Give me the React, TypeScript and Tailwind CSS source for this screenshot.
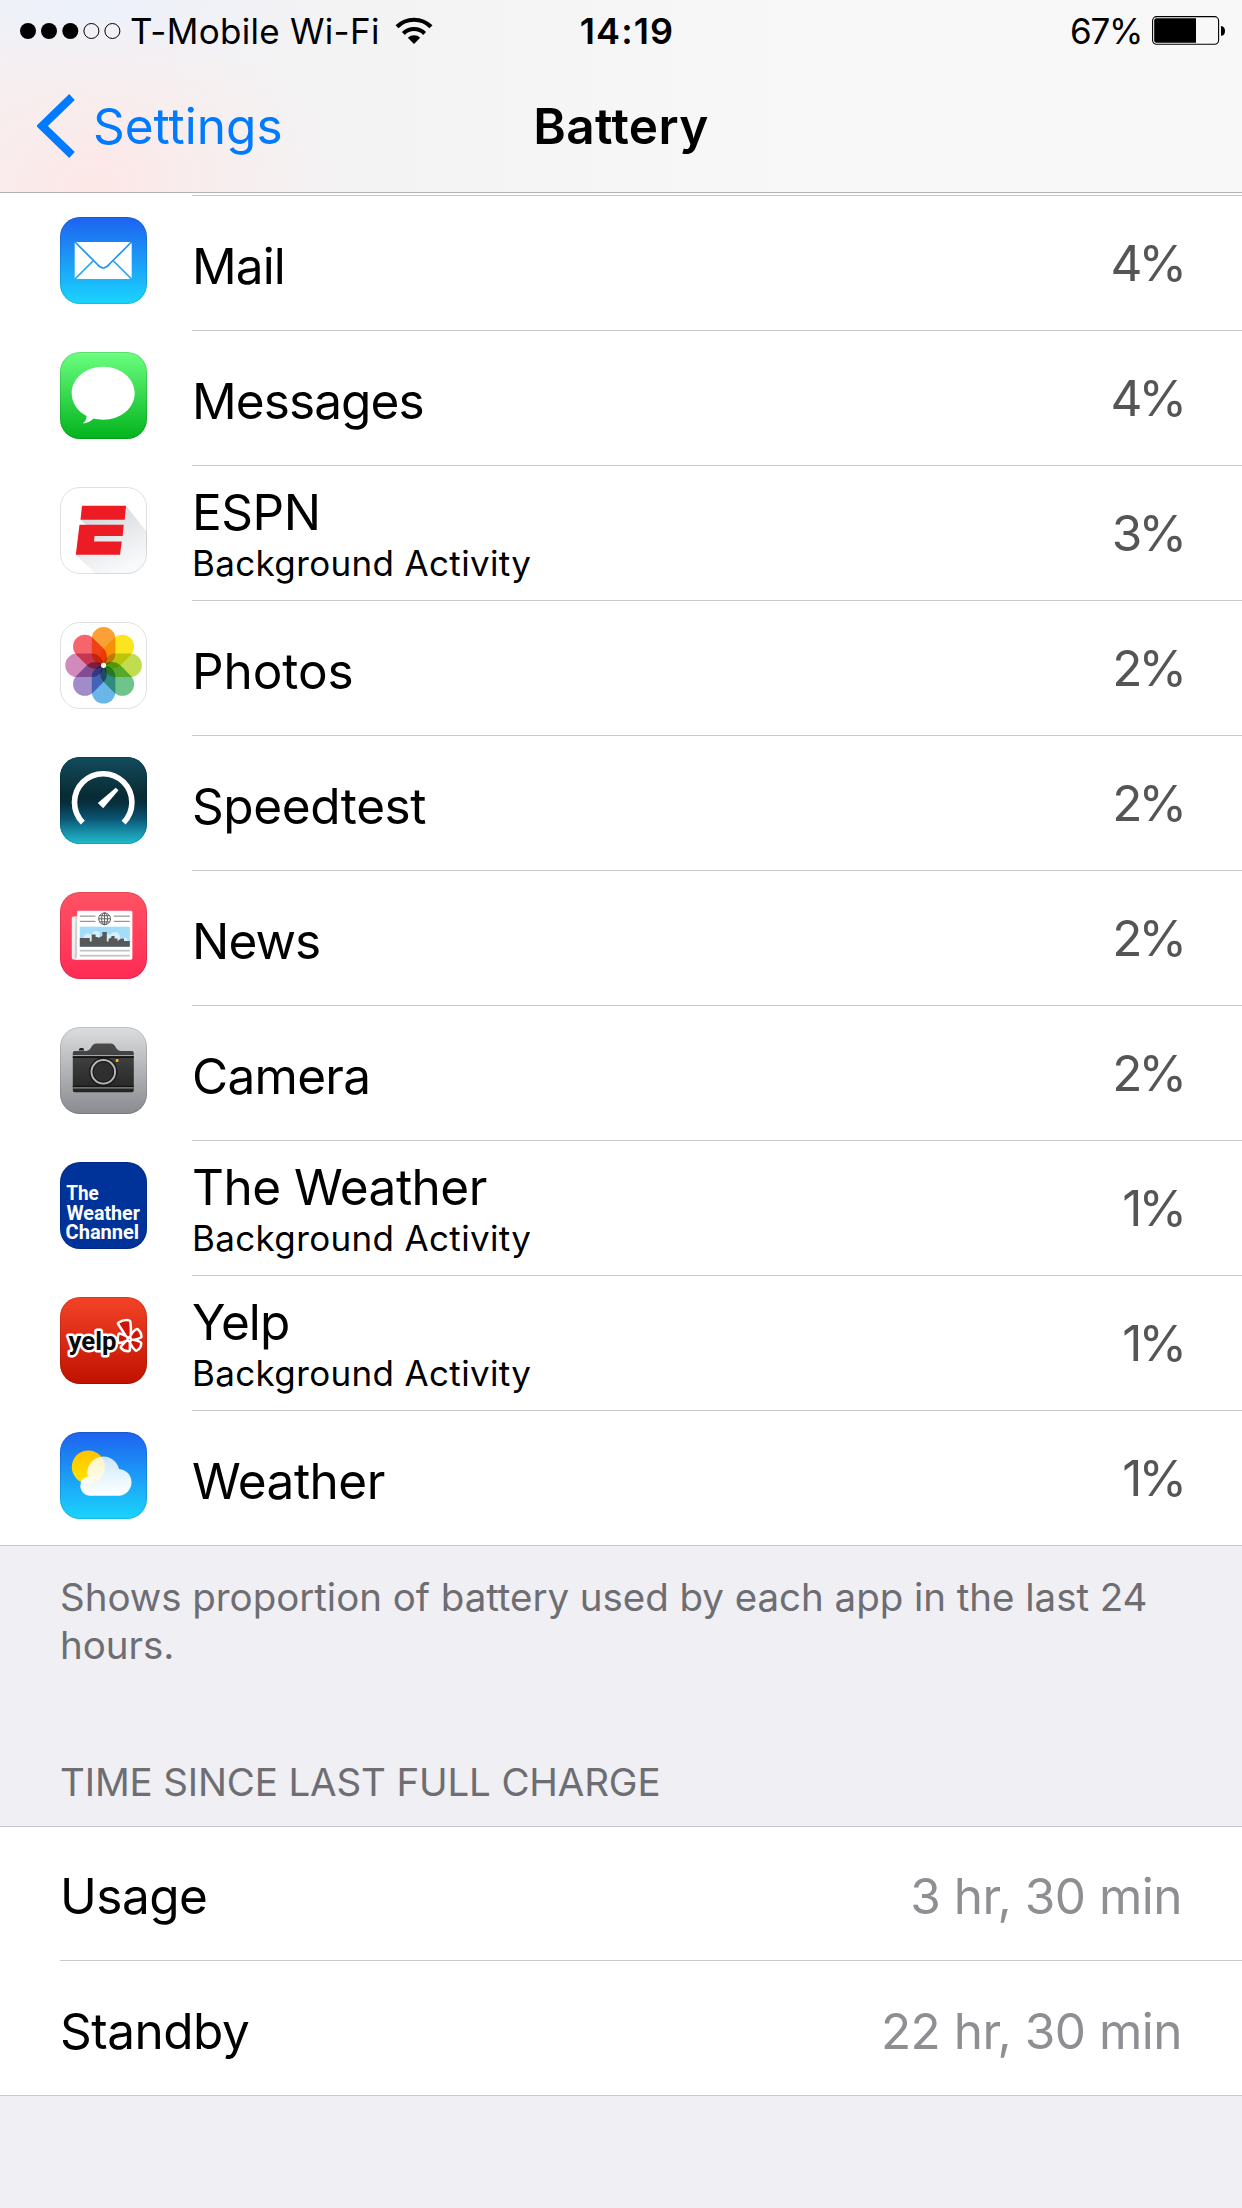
import type { ReactNode } from "react";

function Tile({ id, from, to, children }: { id: string; from: string; to: string; children: ReactNode }) {
  return (
    <svg viewBox="0 0 87 87" className="w-[87px] h-[87px] shrink-0">
      <defs>
        <linearGradient id={`${id}-bg`} x1="0" y1="0" x2="0" y2="1">
          <stop offset="0" stopColor={from} />
          <stop offset="1" stopColor={to} />
        </linearGradient>
        <clipPath id={`${id}-clip`}>
          <rect width="87" height="87" rx="20" />
        </clipPath>
      </defs>
      <g clipPath={`url(#${id}-clip)`}>
        <rect width="87" height="87" fill={`url(#${id}-bg)`} />
        {children}
      </g>
      <rect x="0.5" y="0.5" width="86" height="86" rx="19.5" fill="none" stroke="#000" strokeOpacity="0.12" />
    </svg>
  );
}

function MailIcon() {
  return (
    <Tile id="mail" from="#1d62f0" to="#1ad5fd">
      <rect x="14.7" y="25" width="57" height="37" rx="0.8" fill="#fff" />
      <g fill="none" stroke="#1f93f6" strokeWidth="1.7">
        <path d="M15 25 L37.5 47.5 Q43.2 54.5 49 47.5 L71.5 25" />
        <path d="M15 62 L33 44" stroke="#1fa5f9" />
        <path d="M71.5 62 L53.5 44" stroke="#1fa5f9" />
      </g>
    </Tile>
  );
}

function MessagesIcon() {
  return (
    <Tile id="messages" from="#6bff80" to="#02b31c">
      <path
        d="M43.2 14.7 C60.6 14.7 74.7 26.5 74.7 41.2 C74.7 55.9 60.6 67.7 43.2 67.7 C39.6 67.7 36.6 67.2 33.6 66.5 C30.5 69.5 27 71.3 22.8 71.5 C25.2 69.6 26.6 67 26.6 64 C17.6 59.3 11.7 51 11.7 41.2 C11.7 26.5 25.8 14.7 43.2 14.7 Z"
        fill="#fff"
      />
    </Tile>
  );
}

function EspnIcon() {
  return (
    <Tile id="espn" from="#ffffff" to="#ffffff">
      <defs>
        <linearGradient id="espn-shade" x1="0" y1="0" x2="0.5" y2="1">
          <stop offset="0.2" stopColor="#d6dadd" />
          <stop offset="1" stopColor="#f8f9fa" />
        </linearGradient>
      </defs>
      <path d="M66 18.7 L87 45 L87 87 L36 87 L15.8 67.7 L26 37.7 L20.5 32.7 Z" fill="url(#espn-shade)" />
      <path d="M22 18.7 H66 L64.7 32.7 H20.5 Z" fill="#ed1c24" />
      <path d="M19.5 37.7 H63.7 L62.7 49 H34.5 L34 54.5 H61.8 L60 67.7 H15.8 Z" fill="#ed1c24" />
    </Tile>
  );
}

const petals = [
  { angle: 0, color: "#fba034" },
  { angle: 45, color: "#fbe51f" },
  { angle: 90, color: "#c0dc4f" },
  { angle: 135, color: "#6fc48c" },
  { angle: 180, color: "#6ab6e8" },
  { angle: 225, color: "#a08cc8" },
  { angle: 270, color: "#d08abc" },
  { angle: 315, color: "#f4666c" },
];

function PhotosIcon() {
  return (
    <Tile id="photos" from="#ffffff" to="#ffffff">
      {petals.map((p) => (
        <rect
          key={p.angle}
          className="mix-blend-multiply"
          x="31.8"
          y="5"
          width="23.6"
          height="38.2"
          rx="11.8"
          fill={p.color}
          transform={`rotate(${p.angle} 43.6 43.3)`}
        />
      ))}
      <circle cx="43.6" cy="43.3" r="2.6" fill="#fff" />
    </Tile>
  );
}

function SpeedtestIcon() {
  return (
    <Tile id="speedtest" from="#114a5c" to="#20b8ca">
      <defs>
        <linearGradient id="speedtest-sky" x1="0" y1="0" x2="0" y2="1">
          <stop offset="0" stopColor="#124c5d" />
          <stop offset="0.45" stopColor="#082a33" />
          <stop offset="0.54" stopColor="#07303f" />
          <stop offset="0.7" stopColor="#0a5270" />
          <stop offset="0.82" stopColor="#14809b" />
          <stop offset="1" stopColor="#21bccd" />
        </linearGradient>
      </defs>
      <rect width="87" height="87" fill="url(#speedtest-sky)" />
      <path d="M22.8 65.6 A28.7 28.7 0 1 1 63.6 65.6" fill="none" stroke="#fff" strokeWidth="5.6" />
      <path d="M55.8 30.8 L58.5 33.2 L43.2 51.2 L37.8 46 Z" fill="#fff" />
    </Tile>
  );
}

function NewsIcon() {
  return (
    <Tile id="news" from="#ff5263" to="#ff2b55">
      <path d="M13.2 24.5 H18 V67.6 H14 Q11.8 67.6 11.8 65.4 V26 Q11.8 24.5 13.2 24.5 Z" fill="#f1f1f1" />
      <path d="M15.5 24.5 H17.3 V64 Q17.3 67 14.5 67.6 Z" fill="#cfcfcf" />
      <path d="M18.4 18.7 H71 Q72.4 18.7 72.4 20 V66 Q72.4 67.7 71 67.7 H15 Q17.2 66.5 17.2 64 V20 Q17.2 18.7 18.4 18.7 Z" fill="#fff" />
      <g fill="#8a8a8a">
        <rect x="19.8" y="23.6" width="15.6" height="1.1" />
        <rect x="19.8" y="28.8" width="15.6" height="1.1" />
        <rect x="53.8" y="23.6" width="16" height="1.1" />
        <rect x="53.8" y="28.8" width="16" height="1.1" />
      </g>
      <g fill="none" stroke="#5f5f5f" strokeWidth="1">
        <circle cx="44.6" cy="26.8" r="5.9" />
        <ellipse cx="44.6" cy="26.8" rx="3" ry="5.9" />
        <path d="M44.6 20.9 V32.7 M38.7 26.8 H50.5 M39.6 23.7 H49.6 M39.6 29.9 H49.6" />
      </g>
      <rect x="19.8" y="34.7" width="50" height="20" fill="#a4ddf9" />
      <g fill="#d5effc">
        <circle cx="28" cy="46" r="4.5" />
        <circle cx="36" cy="43" r="4" />
        <circle cx="55" cy="45" r="5" />
        <circle cx="48" cy="46" r="4" />
        <circle cx="64" cy="49" r="3.5" />
      </g>
      <path
        d="M19.8 54.8 V46 H29.8 V49.5 H31.7 V42.6 H35.6 V45 H38 V46 L42.4 44 V40 H46.8 V49.5 H48.6 V47 L51.4 45.5 V44 H54.6 V46.4 H57.5 V49 L61.4 46.5 H64 V49 H69.8 V54.8 Z"
        fill="#585858"
      />
      <rect x="19.8" y="57.8" width="50" height="1.7" fill="#c2c2c2" />
      <rect x="19.8" y="62.8" width="50" height="1.7" fill="#c2c2c2" />
    </Tile>
  );
}

function CameraIcon() {
  return (
    <Tile id="camera" from="#dcddde" to="#898b90">
      <defs>
        <linearGradient id="camera-body" x1="0" y1="0" x2="0" y2="1">
          <stop offset="0" stopColor="#4b4b4b" />
          <stop offset="1" stopColor="#242424" />
        </linearGradient>
      </defs>
      <path d="M18.8 23.5 Q18.8 21 20.5 21 H22.5 Q24.2 21 24.2 23.5 Z" fill="#1e1e1e" />
      <path
        d="M14.5 24 H26 C32 24 30.5 16.6 36.5 16.6 H50.5 C56.5 16.6 54.8 24 61 24 H72 Q73.8 24 73.8 26 V63 Q73.8 65.2 72 65.2 H14.7 Q12.8 65.2 12.8 63 V26 Q12.8 24 14.5 24 Z"
        fill="url(#camera-body)"
      />
      <rect x="12.8" y="29.3" width="61" height="1.7" fill="#151515" />
      <rect x="12.8" y="28" width="61" height="1" fill="#a5a5a5" />
      <rect x="12.8" y="58.8" width="61" height="1.5" fill="#151515" />
      <rect x="12.8" y="60.4" width="61" height="1" fill="#a5a5a5" />
      <circle cx="43.3" cy="44.8" r="14.3" fill="#1a1a1a" />
      <circle cx="43.3" cy="44.8" r="11.8" fill="#333" stroke="#b5b5b7" strokeWidth="2" />
      <circle cx="43.3" cy="44.8" r="10.2" fill="#2f2f2f" stroke="#111" strokeWidth="0.8" />
      <rect x="55" y="31.6" width="4" height="3.8" rx="1" fill="#1a1a1a" />
      <rect x="55.6" y="32" width="3" height="3" rx="0.6" fill="#fdb813" />
    </Tile>
  );
}

function WeatherChannelIcon() {
  return (
    <Tile id="twc" from="#003399" to="#003399">
      <g fill="#fff" className="font-['Roboto',sans-serif] font-bold text-[20px]">
        <text x="6.2" y="38.4" textLength="32.5" lengthAdjust="spacingAndGlyphs">The</text>
        <text x="6.4" y="57.6" textLength="73.5" lengthAdjust="spacingAndGlyphs">Weather</text>
        <text x="5.6" y="77" textLength="73.5" lengthAdjust="spacingAndGlyphs">Channel</text>
      </g>
    </Tile>
  );
}

function YelpBurst() {
  return (
    <>
      <path d="M59.3 26.6 Q64 23.6 69 24.6 Q70 30 69.5 38.5 Q68.5 40 67 38.5 Z" />
      <path d="M71.3 40 Q74 34.5 77 33.2 Q80 35.5 80.2 39.5 Q77 41.5 72.3 41.8 Z" />
      <path d="M72 43.8 Q77 44.4 80 46.3 Q79.8 50.5 76.2 52.4 Q73.4 50 71.2 45.4 Z" />
      <path d="M68.6 45.5 V53 Q64.5 53.2 62 50.3 Q64 47.3 67.2 44.7 Z" />
      <path d="M66.4 42.6 Q62.5 44.6 59.4 44.8 Q58.2 41 59.6 37.7 Q63.2 38.6 66.3 40.8 Z" />
    </>
  );
}

function YelpIcon() {
  return (
    <Tile id="yelp" from="#f34327" to="#c01100">
      {/* the white outline is the stroke, painted under the letters */}
      <g fill="#fff" stroke="#fff" strokeWidth="5" strokeLinejoin="round">
        <YelpBurst />
      </g>
      <text
        x="8.5"
        y="52.5"
        textLength="48"
        lengthAdjust="spacingAndGlyphs"
        fill="#0a0a0a"
        stroke="#fff"
        strokeWidth="5"
        strokeLinejoin="round"
        className="font-['Roboto',sans-serif] font-bold text-[26px] [paint-order:stroke]"
      >
        yelp
      </text>
      <g fill="#cf1505">
        <YelpBurst />
      </g>
    </Tile>
  );
}

function WeatherIcon() {
  return (
    <Tile id="weather" from="#1d62f0" to="#1ad5fd">
      <defs>
        <linearGradient id="weather-sun" x1="0" y1="0" x2="0" y2="1">
          <stop offset="0" stopColor="#ffc200" />
          <stop offset="1" stopColor="#ffe600" />
        </linearGradient>
        <linearGradient id="weather-cloud" x1="0" y1="0" x2="0" y2="1">
          <stop offset="0" stopColor="#fff" stopOpacity="0.78" />
          <stop offset="1" stopColor="#fff" />
        </linearGradient>
      </defs>
      <circle cx="28.3" cy="35" r="16.5" fill="url(#weather-sun)" />
      <path
        d="M29.6 63.7 A9.9 9.9 0 0 1 27.8 44.2 A16 16 0 0 1 59 37 A13.4 13.4 0 0 1 59.5 63.7 Z"
        fill="url(#weather-cloud)"
      />
    </Tile>
  );
}

const apps = [
  { name: "Mail", percent: "4%", icon: <MailIcon />, tracking: "tracking-[-0.9px]" },
  { name: "Messages", percent: "4%", icon: <MessagesIcon />, tracking: "tracking-[-0.9px]" },
  { name: "ESPN", percent: "3%", icon: <EspnIcon />, tracking: "tracking-[-0.5px]", background: true },
  { name: "Photos", percent: "2%", icon: <PhotosIcon />, tracking: "tracking-[-0.1px]" },
  { name: "Speedtest", percent: "2%", icon: <SpeedtestIcon />, tracking: "tracking-[-0.4px]" },
  { name: "News", percent: "2%", icon: <NewsIcon />, tracking: "tracking-[-0.9px]" },
  { name: "Camera", percent: "2%", icon: <CameraIcon />, tracking: "tracking-[-0.7px]" },
  { name: "The Weather", percent: "1%", icon: <WeatherChannelIcon />, tracking: "tracking-[-0.5px]", background: true },
  { name: "Yelp", percent: "1%", icon: <YelpIcon />, tracking: "tracking-[-0.9px]", background: true },
  { name: "Weather", percent: "1%", icon: <WeatherIcon />, tracking: "tracking-[-0.5px]" },
];

const times = [
  { label: "Usage", value: "3 hr, 30 min" },
  { label: "Standby", value: "22 hr, 30 min" },
];

function StatusBar() {
  return (
    <div className="flex h-[61px] text-[35px] leading-[61px] whitespace-nowrap">
      <div className="flex items-center w-[540px] pl-[19px]">
        <svg viewBox="0 0 102 18" className="w-[102px] h-[18px] shrink-0">
          <circle cx="9" cy="9" r="8" />
          <circle cx="30" cy="9" r="8" />
          <circle cx="51.3" cy="9" r="8" />
          <circle cx="72.4" cy="9" r="7.5" fill="none" stroke="#000" />
          <circle cx="93.4" cy="9" r="7.5" fill="none" stroke="#000" />
        </svg>
        <span className="ml-[9px] w-[265px] pt-[2px] tracking-[0.3px]">T-Mobile Wi-Fi</span>
        <svg viewBox="0 0 38 28" className="w-[38px] h-[28px] shrink-0">
          <path d="M2 9.8 A24 24 0 0 1 36 9.8" fill="none" stroke="#000" strokeWidth="4.2" />
          <path d="M8.4 16.4 A15 15 0 0 1 29.6 16.4" fill="none" stroke="#000" strokeWidth="4.2" />
          <path d="M19 27 L12.8 20.8 A9 9 0 0 1 25.2 20.8 Z" />
        </svg>
      </div>
      <div className="w-[174px] pt-px text-center font-semibold text-[36px] tracking-[1.1px]">14:19</div>
      <div className="flex flex-1 items-center justify-end pr-4">
        <span className="mr-[10px] pt-px tracking-[-1.3px]">67%</span>
        <svg viewBox="0 0 74 29" className="w-[74px] h-[29px] shrink-0">
          <rect x="0.6" y="0.6" width="66" height="27.6" rx="4" fill="none" stroke="#000" strokeWidth="1.1" />
          <path d="M4.5 2.2 H44 V26.8 H4.5 Q2.2 26.8 2.2 24.5 V4.5 Q2.2 2.2 4.5 2.2 Z" />
          <path d="M69 10 Q73 10.5 73 14.9 Q73 19.3 69 19.8 Z" />
        </svg>
      </div>
    </div>
  );
}

export default function App() {
  return (
    <main className="w-[1242px] h-[2208px] overflow-hidden bg-[#efeff4] font-['Inter',sans-serif] text-black">
      {/* Header */}
      <header className="h-[193px] border-b border-[#b2b2b2] bg-[#f8f8f8] bg-[radial-gradient(ellipse_240px_170px_at_95px_185px,#fde7e7_0%,rgba(251,234,234,0.7)_40%,rgba(248,242,242,0)_100%),radial-gradient(ellipse_260px_100px_at_80px_0px,#edf1fb_0%,rgba(240,242,248,0)_100%),linear-gradient(to_right,#f5f1f2,#f3f3f4_30%,#f8f8f8_65%)]">
        <StatusBar />
        <nav className="grid grid-cols-3 h-[131px] text-[49.5px] leading-[130px]">
          <div className="flex h-[130px] items-center pl-[37px] text-[#007aff]">
            <svg viewBox="0 0 38 64" className="w-[38px] h-[64px] shrink-0">
              <path d="M35 3 L5 32 L35 61" fill="none" stroke="#007aff" strokeWidth="8" />
            </svg>
            <span className="ml-[18px] -mt-px">Settings</span>
          </div>
          <h1 className="text-center font-semibold tracking-[0.4px]">Battery</h1>
        </nav>
      </header>

      {/* App list */}
      <section className="pt-[2px] bg-white border-b border-[#c8c7cc]">
        <div className="ml-48 h-px bg-[#c8c7cc]" />
        {apps.map((app, i) => (
          <div key={app.name} className="flex pl-[60px]">
            <div className="w-[132px] pt-[21px]">{app.icon}</div>
            <div
              className={
                i < apps.length - 1
                  ? "flex flex-1 h-[135px] justify-between border-b border-[#c8c7cc] pr-[59px]"
                  : "flex flex-1 h-[134px] justify-between pr-[59px]"
              }
            >
              {app.background ? (
                <div className="pt-4">
                  <div className={`text-[49.5px] leading-[60px] ${app.tracking}`}>{app.name}</div>
                  <div className="text-[35px] leading-[42px] tracking-[0.35px]">Background Activity</div>
                </div>
              ) : (
                <div className={`text-[49.5px] leading-[140px] ${app.tracking}`}>{app.name}</div>
              )}
              <div className="text-[49.5px] leading-[134px] tracking-[-4px] text-[#555]">{app.percent}</div>
            </div>
          </div>
        ))}
      </section>
      <p className="px-[60px] pt-[27px] text-[38.5px] leading-[48px] tracking-[-0.04px] text-[#6d6d72]">
        Shows proportion of battery used by each app in the last 24
        <br />
        hours.
      </p>

      {/* Time since last full charge */}
      <h2 className="px-[60px] pt-[88px] pb-[19px] text-[38.5px] leading-[50px] tracking-[-0.15px] text-[#6d6d72]">
        TIME SINCE LAST FULL CHARGE
      </h2>
      <section className="bg-white border-y border-[#c8c7cc]">
        {times.map((row, i) => (
          <div
            key={row.label}
            className={
              i === 0
                ? "flex justify-between ml-[60px] h-[134px] pr-[60px] border-b border-[#c8c7cc] text-[49.5px] leading-[138px] tracking-[-0.5px]"
                : "flex justify-between ml-[60px] h-[134px] pr-[60px] text-[49.5px] leading-[140px] tracking-[-0.5px]"
            }
          >
            <span>{row.label}</span>
            <span className="text-[#8e8e93]">{row.value}</span>
          </div>
        ))}
      </section>
    </main>
  );
}
